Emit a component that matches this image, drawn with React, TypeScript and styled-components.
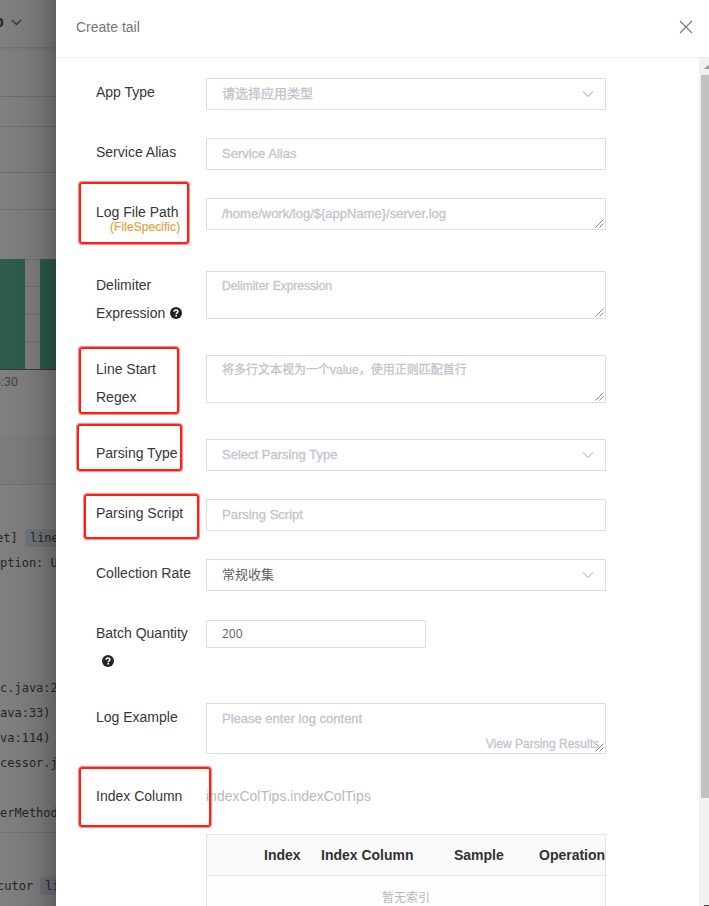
import React from "react";
import styled, { createGlobalStyle } from "styled-components";

const GlobalStyle = createGlobalStyle`
  * { box-sizing: border-box; }
  body { margin: 0; overflow: hidden; font-family: "Liberation Sans", "Noto Sans CJK SC", sans-serif; }
`;

const Screen = styled.div`
  position: relative;
  display: grid;
  grid-template-columns: 56px minmax(0, 1fr);
  width: 709px;
  height: 906px;
  overflow: hidden;
  background: #fff;
`;

/* Dimmed page behind the drawer */
const Backdrop = styled.aside`
  position: relative;
  height: 906px;
  overflow: hidden;
  background: #808080;
  &::after {
    content: "";
    position: absolute;
    inset: 0;
    background: linear-gradient(to right, rgba(0,0,0,0) 0%, rgba(0,0,0,.03) 35%, rgba(0,0,0,.1) 70%, rgba(0,0,0,.25) 100%);
  }
`;

const TopBar = styled.div`
  display: flex;
  align-items: center;
  height: 47px;
  padding-bottom: 3px;
  color: #252b38;
  font: bold 16px "Liberation Sans", sans-serif;
  box-shadow: 0 1px 3px rgba(0, 0, 0, 0.15);
  span { margin-left: -6px; width: 17px; }
`;

const Line = styled.div<{ $h: number; $c?: string }>`
  height: ${(p) => p.$h}px;
  border-bottom: 1px solid ${(p) => p.$c || "#6e6e70"};
`;

const Chart = styled.div`
  display: flex;
  height: 111px;
  margin-top: 49px;
  border-bottom: 1px solid #37393d;
`;
const Bar = styled.div<{ $w: number }>`
  width: ${(p) => p.$w}px;
  background: #2d5d4e;
`;
const Gap = styled.div`
  width: 15px;
  border-top: 1px solid #707276;
  background: repeating-linear-gradient(#808080 0 26px, #707276 26px 27px, #808080 27px 27.5px);
`;
const Tick = styled.div`
  height: 67px;
  padding-top: 5px;
  margin-left: -6px;
  color: #424344;
  font: 12.5px/14px Roboto, sans-serif;
  border-bottom: 1px solid #7b7b7b;
`;
const Band = styled.div`
  height: 48px;
  border-bottom: 1px solid #707176;
  background: #7d7d7d;
`;
const LogLines = styled.div<{ $top: number; $h: number; $divided?: boolean }>`
  height: ${(p) => p.$h}px;
  padding-top: ${(p) => p.$top}px;
  overflow: hidden;
  color: #242628;
  font: 12px/25px "DejaVu Sans Mono", monospace;
  white-space: pre;
  ${(p) => p.$divided && "border-bottom: 1px solid #737476;"}
`;
const LogLine = styled.div<{ $shift?: number }>`
  height: 25px;
  margin-left: ${(p) => p.$shift || 0}px;
`;
const Tag = styled.span`
  display: inline-block;
  height: 18px;
  padding: 0 5px;
  line-height: 18px;
  border-radius: 4px;
  background: #70767c;
`;

/* Drawer */
const Drawer = styled.main`
  display: flex;
  flex-direction: column;
  min-width: 0;
  height: 906px;
  background: #fff;
`;
const DrawerHeader = styled.header`
  display: flex;
  justify-content: space-between;
  align-items: center;
  flex: none;
  height: 58px;
  padding: 0 16px 4px 20px;
  border-bottom: 1px solid #ebecf3;
  color: #72767b;
  font-size: 14px;
`;
const DrawerBody = styled.div`
  display: flex;
  flex: 1;
  min-height: 0;
`;
const Form = styled.form`
  flex: 1;
  min-width: 0;
  padding: 20px 0 0 40px;
`;
const Row = styled.div<{ $h: number }>`
  display: grid;
  grid-template-columns: 110px 400px;
  align-items: start;
  height: ${(p) => p.$h}px;
`;
const Label = styled.div`
  color: #36373a;
  font-size: 14px;
  line-height: 28px;
  white-space: nowrap;
`;
const Note = styled.div`
  margin: -6px 0 0 14px;
  color: #e6a23c;
  font-size: 12px;
  line-height: 14px;
  letter-spacing: 0.06px;
  -webkit-text-stroke: 0.2px currentColor;
`;
const LabelLine = styled.div<{ $indent?: number }>`
  display: flex;
  align-items: center;
  gap: 5px;
  height: 28px;
  padding-left: ${(p) => p.$indent || 0}px;
`;
const Control = styled.div<{ $h?: number; $small?: boolean; $filled?: boolean; $narrow?: boolean; $top?: number }>`
  position: relative;
  display: flex;
  justify-content: space-between;
  width: ${(p) => (p.$narrow ? 220 : 400)}px;
  height: ${(p) => p.$h || 32}px;
  margin-top: ${(p) => p.$top || 0}px;
  padding: 0 11px 0 15px;
  border: 1px solid #dcdee6;
  background: #fff;
  color: ${(p) => (p.$filled ? "#5c5e63" : "#c1c4cc")};
  font-size: ${(p) => (p.$small || p.$narrow ? 12 : 13)}px;
  ${(p) => p.$narrow && 'font-family: "Open Sans", sans-serif;'}
  line-height: ${(p) => (p.$small ? 28 : p.$narrow ? 26 : 30)}px;
  -webkit-text-stroke: ${(p) => (p.$filled ? 0 : 0.3)}px currentColor;
`;
const Grip = styled.svg`
  position: absolute;
  right: 1px;
  bottom: 1px;
  width: 9px;
  height: 9px;
`;
const ResultsLink = styled.span`
  position: absolute;
  right: 6px;
  bottom: 2px;
  font-size: 12px;
  line-height: 14px;
`;
const Chevron = styled.svg`
  width: 12px;
  height: 8px;
  margin-top: 11px;
`;
const Tips = styled.div`
  color: #b9b9b9;
  font-size: 14px;
  line-height: 28px;
`;
const Table = styled.div`
  width: 400px;
  height: 80px;
  margin-left: 110px;
  border: 1px solid #e4e5e7;
  background: #fdfdfd;
`;
const TableHead = styled.div`
  display: grid;
  grid-template-columns: 57px 133px 85px 1fr;
  align-items: center;
  height: 41px;
  padding-left: 57px;
  border-bottom: 1px solid #e4e5e7;
  background: #fafafa;
  color: #303133;
  font-size: 14px;
  font-weight: bold;
  white-space: nowrap;
`;
const Empty = styled.div`
  padding-top: 12px;
  color: #b8b8b8;
  font-size: 12px;
  line-height: 20px;
  text-align: center;
`;
const Scrollbar = styled.div`
  display: flex;
  flex-direction: column;
  flex: none;
  width: 10px;
  padding-left: 2px;
  background: #f1f1f1;
  overflow: hidden;
`;
const ArrowUp = styled.svg`
  flex: none;
  width: 11px;
  height: 17px;
`;
const Thumb = styled.div`
  flex: none;
  height: 723px;
  background: #c1c1c1;
`;
const Corner = styled.div`
  width: 5px;
  height: 1px;
  margin: auto 0 0 3px;
  background: #505050;
`;

/* Red highlight frames laid over the form */
const Highlight = styled.div<{ $x: number; $y: number; $w: number; $h: number }>`
  position: absolute;
  left: ${(p) => p.$x + 1}px;
  top: ${(p) => p.$y + 1}px;
  width: ${(p) => p.$w - 2}px;
  height: ${(p) => p.$h - 2}px;
  border: 2px solid #ff2015;
  border-radius: 3px;
  box-shadow: 0 0 0 1px rgba(255, 32, 21, 0.5);
`;

const highlights = [
  [78, 181, 112, 64],
  [78, 346, 102, 69],
  [76, 423, 107, 49],
  [83, 493, 117, 47],
  [78, 766, 134, 62],
];

const DownIcon = () => (
  <Chevron viewBox="0 0 12 8" fill="none" stroke="#c0c4cc" strokeWidth="1.1">
    <path d="M1 1.5 6 6.5 11 1.5" />
  </Chevron>
);
const GripIcon = () => (
  <Grip viewBox="0 0 9 9" stroke="#555" strokeWidth="0.7">
    <path d="M.5 8.5 8.5 .5M4.5 8.5 8.5 4.5" />
  </Grip>
);
const HelpIcon = () => (
  <svg width="12" height="12" viewBox="0 0 12 12">
    <circle cx="6" cy="6" r="6" fill="#222325" />
    <path d="M4.1 4.7C4.1 2.3 7.9 2.3 7.9 4.6 7.9 5.9 6.2 5.9 6.2 7.2" fill="none" stroke="#fff" strokeWidth="1.5" />
    <rect x="5.4" y="8" width="1.6" height="1.6" fill="#fff" />
  </svg>
);

const trace = ["", "", "", "", "c.java:2", "ava:33)", "va:114)", "cessor.j", "", "erMethod"];

export default function App() {
  return (
    <Screen>
      <GlobalStyle />
      <Backdrop>
        <TopBar>
          <span>p</span>
          <svg width="11" height="7" viewBox="0 0 11 7" fill="none" stroke="#303540" strokeWidth="1.4">
            <path d="M1 1 5.5 5.5 10 1" />
          </svg>
        </TopBar>
        <Line $h={50} />
        <Line $h={30} />
        <Line $h={46} />
        <Line $h={37} />
        <Chart>
          <Bar $w={25} />
          <Gap />
          <Bar $w={16} />
        </Chart>
        <Tick>8:30</Tick>
        <Band />
        <LogLines $top={41} $h={348} $divided>
          <LogLine $shift={-4}>et] <Tag>line</Tag></LogLine>
          <LogLine>ption: U</LogLine>
          {trace.map((text, i) => (
            <LogLine key={i}>{text}</LogLine>
          ))}
        </LogLines>
        <LogLines $top={41} $h={73}>
          <LogLine $shift={-3}>cutor <Tag>li</Tag></LogLine>
        </LogLines>
      </Backdrop>
      <Drawer>
        <DrawerHeader>
          Create tail
          <svg width="14" height="14" viewBox="0 0 14 14" stroke="#787b82" strokeWidth="1.2">
            <path d="M1 1 13 13M13 1 1 13" />
          </svg>
        </DrawerHeader>
        <DrawerBody>
          <Form>
            <Row $h={60}>
              <Label>App Type</Label>
              <Control>请选择应用类型<DownIcon /></Control>
            </Row>
            <Row $h={60}>
              <Label>Service Alias</Label>
              <Control>Service Alias</Control>
            </Row>
            <Row $h={73}>
              <Label>Log File Path<Note>(FileSpecific)</Note></Label>
              <Control>{"/home/work/log/${appName}/server.log"}<GripIcon /></Control>
            </Row>
            <Row $h={84}>
              <Label>
                <LabelLine>Delimiter</LabelLine>
                <LabelLine>Expression<HelpIcon /></LabelLine>
              </Label>
              <Control $h={48} $small>Delimiter Expression<GripIcon /></Control>
            </Row>
            <Row $h={84}>
              <Label>
                <LabelLine>Line Start</LabelLine>
                <LabelLine>Regex</LabelLine>
              </Label>
              <Control $h={48} $small>将多行文本视为一个value，使用正则匹配首行<GripIcon /></Control>
            </Row>
            <Row $h={60}>
              <Label>Parsing Type</Label>
              <Control>Select Parsing Type<DownIcon /></Control>
            </Row>
            <Row $h={60}>
              <Label>Parsing Script</Label>
              <Control>Parsing Script</Control>
            </Row>
            <Row $h={60}>
              <Label>Collection Rate</Label>
              <Control $filled>常规收集<DownIcon /></Control>
            </Row>
            <Row $h={84}>
              <Label>
                <LabelLine>Batch Quantity</LabelLine>
                <LabelLine $indent={6}><HelpIcon /></LabelLine>
              </Label>
              <Control $h={28} $top={1} $narrow $filled>200</Control>
            </Row>
            <Row $h={79}>
              <Label>Log Example</Label>
              <Control $h={51}>
                Please enter log content
                <ResultsLink>View Parsing Results</ResultsLink>
                <GripIcon />
              </Control>
            </Row>
            <Row $h={52}>
              <Label>Index Column</Label>
              <Tips>indexColTips.indexColTips</Tips>
            </Row>
            <Table>
              <TableHead>
                <span>Index</span>
                <span>Index Column</span>
                <span>Sample</span>
                <span>Operation</span>
              </TableHead>
              <Empty>暂无索引</Empty>
            </Table>
          </Form>
          <Scrollbar>
            <ArrowUp viewBox="0 0 11 17">
              <path d="M3 11 7 7 11 11Z" fill="#9a9a9a" />
            </ArrowUp>
            <Thumb />
            <Corner />
          </Scrollbar>
        </DrawerBody>
      </Drawer>
      {highlights.map(([x, y, w, h]) => (
        <Highlight key={y} $x={x} $y={y} $w={w} $h={h} />
      ))}
    </Screen>
  );
}
